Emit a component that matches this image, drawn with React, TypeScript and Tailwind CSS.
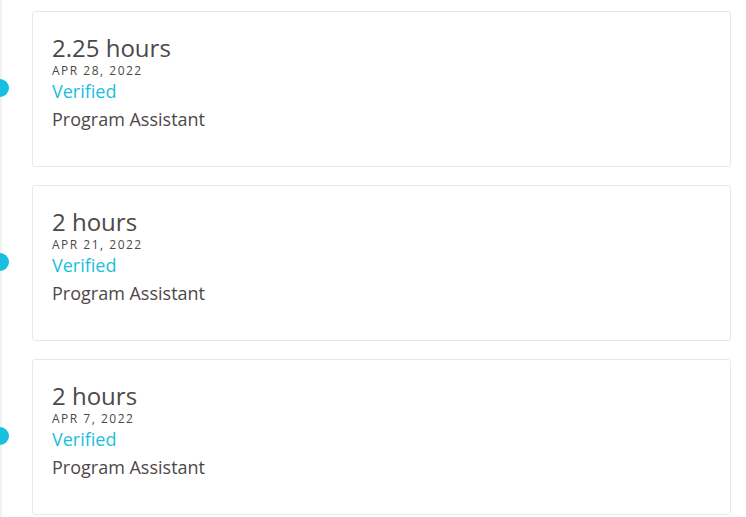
const entries = [
  { hours: "2.25 hours", date: "APR 28, 2022", role: "Program Assistant" },
  { hours: "2 hours", date: "APR 21, 2022", role: "Program Assistant" },
  { hours: "2 hours", date: "APR 7, 2022", role: "Program Assistant" },
];

function EntryCard({ hours, date, role }: { hours: string; date: string; role: string }) {
  return (
    <div className="relative flex items-center">
      {/* timeline dot */}
      <div className="absolute left-[-11px] top-[68px] w-[18px] h-[18px] rounded-full bg-[#17c0df]"></div>
      <div className="ml-[30px] w-[699px] h-[156px] border border-[#e8e8e8] rounded-[3px] bg-white px-[19px] pt-[21px]">
        <div className="text-[24px] leading-[30px] text-[#4d4848]">{hours}</div>
        <div className="text-[12px] leading-[15px] tracking-[1.5px] text-[#4d4848]">{date}</div>
        <div className="text-[18px] leading-[26px] text-[#19bfdc]">Verified</div>
        <div className="mt-[2px] text-[18px] leading-[26px] text-[#4d4848]">{role}</div>
      </div>
    </div>
  );
}

export default function App() {
  return (
    <div className="w-[746px] h-[517px] overflow-hidden bg-white" style={{ fontFamily: "'Open Sans', sans-serif" }}>
      <div className="h-full border-l-2 border-[#f2f2f2] pt-[11px] flex flex-col gap-[18px]">
        {entries.map((e, i) => (
          <EntryCard key={i} {...e} />
        ))}
      </div>
    </div>
  );
}
